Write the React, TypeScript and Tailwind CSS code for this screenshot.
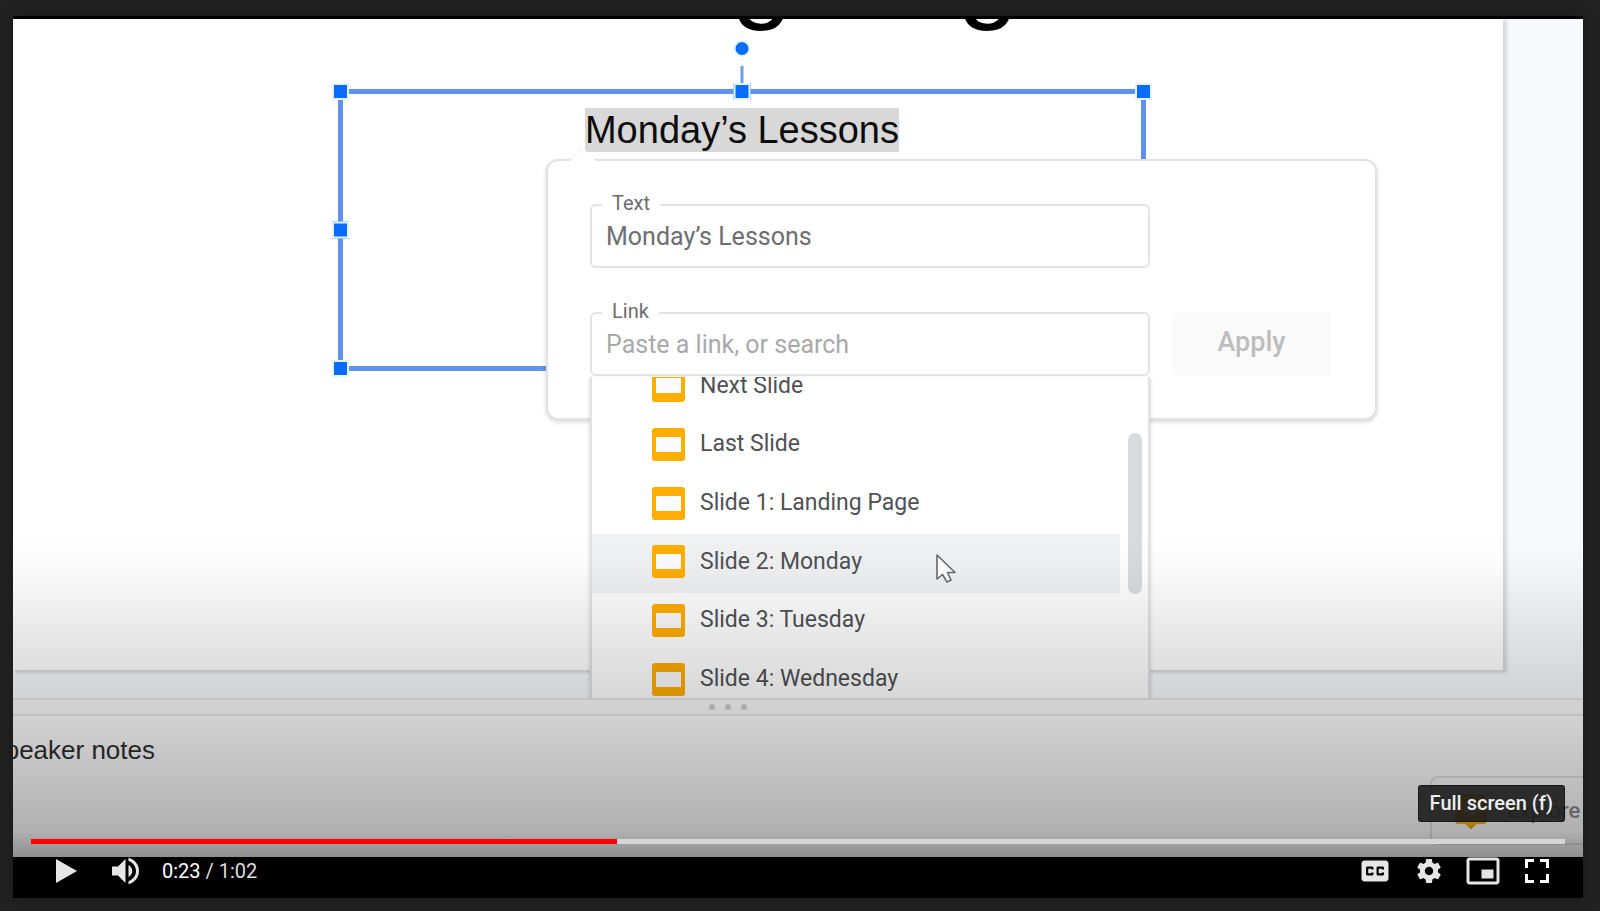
import { useState } from "react";
import type { ReactNode } from "react";

const slides = [
  "Next Slide",
  "Last Slide",
  "Slide 1: Landing Page",
  "Slide 2: Monday",
  "Slide 3: Tuesday",
  "Slide 4: Wednesday",
];

function Handle({ place }: { place: string }) {
  return (
    <span className={`absolute size-[17px] border-2 border-[#e4f4ff] bg-[#0a6cff] ${place}`} />
  );
}

function SlideIcon() {
  return (
    <svg viewBox="0 0 33 33" className="size-[33px] shrink-0" aria-hidden="true">
      <rect x="3" y="8" width="27" height="17" fill="#fbfbfd" />
      <path
        fill="#ffad00"
        fillRule="evenodd"
        d="M3 0h27a3 3 0 0 1 3 3v27a3 3 0 0 1-3 3H3a3 3 0 0 1-3-3V3a3 3 0 0 1 3-3ZM4 9v15h25V9Z"
      />
    </svg>
  );
}

function Field({
  id,
  label,
  value,
  placeholder,
  onChange,
}: {
  id: string;
  label: string;
  value: string;
  placeholder?: string;
  onChange: (value: string) => void;
}) {
  return (
    <div className="relative col-start-1 h-16 rounded-md border-2 border-[#e3e3e4]">
      <label
        htmlFor={id}
        className="absolute -top-4 left-2.5 bg-white px-2.5 text-[20px] leading-[26px] text-[#6c6d70]"
      >
        {label}
      </label>
      <input
        id={id}
        value={value}
        placeholder={placeholder}
        onChange={(e) => onChange(e.target.value)}
        className="size-full bg-transparent px-3.5 text-[25px] text-[#6d6e71] outline-none placeholder:text-[#a9a9ab]"
      />
    </div>
  );
}

function LinkDialog() {
  const [text, setText] = useState("Monday’s Lessons");
  const [link, setLink] = useState("");
  return (
    <div className="absolute top-[140px] left-[533px] w-[831px] rounded-xl border-2 border-[#e2e2e3] bg-white px-[42px] pt-[43px] pb-[42px] shadow-[0_2px_4px_rgba(0,0,0,0.16)]">
      <svg viewBox="0 0 30 16" className="absolute -top-[14px] left-[20px] h-4 w-[30px]" aria-hidden="true">
        <path d="M0 16 15 1l15 15Z" fill="#fff" />
        <path d="M0 14 14 1" stroke="#ececec" strokeWidth="1" />
      </svg>
      <div className="grid grid-cols-[560px_159px] gap-x-[22px] gap-y-11">
        <Field id="link-text" label="Text" value={text} onChange={setText} />
        <Field
          id="link-url"
          label="Link"
          value={link}
          placeholder="Paste a link, or search"
          onChange={setLink}
        />
        <button type="button" className="col-start-2 row-start-2 rounded bg-[#fafafa] pb-1 text-[27px] font-medium text-[#bdbdbe]">
          Apply
        </button>
      </div>
      <div className="absolute top-[216px] left-[42px] h-[330px] w-[560px] overflow-hidden border-x-2 border-[#e2e2e4] bg-white shadow-[0_2px_4px_rgba(0,0,0,0.2)]">
        <ul className="-mt-[19px] mr-[28px] grid h-[352px] grid-rows-6">
          {slides.map((name, i) => (
            <li key={name} className="flex">
              <button
                type="button"
                className={`flex w-full items-center gap-[15px] pb-[3px] pl-[60px] text-left text-[23px] text-[#505154] ${
                  i === 3 ? "bg-[#f0f1f3]" : ""
                }`}
              >
                <SlideIcon />
                {name}
              </button>
            </li>
          ))}
        </ul>
        <span className="absolute top-14 right-[6px] h-[161px] w-3.5 rounded-full bg-[#d9dadd]" />
      </div>
    </div>
  );
}

function Editor() {
  return (
    <div className="relative flex min-h-0 flex-1 flex-col overflow-hidden bg-[#fbfbfb]">
      <div className="relative h-[679px] shrink-0 overflow-hidden bg-[#f8f9fb] pr-20 pb-7">
        <div className="relative h-full overflow-hidden bg-white shadow-[3px_2px_3px_1px_rgba(0,0,0,0.13)]">
          <p className="absolute -top-[111px] left-[388px] font-['Liberation_Sans',sans-serif] text-[110px] leading-[124px] whitespace-nowrap text-black">
            Landing Page
          </p>
          <div className="absolute top-[70px] left-[325px] flex h-[282px] w-[808px] items-start justify-center border-[5px] border-[#5f92ec] pt-[14px]">
            <span className="bg-[#d8d8d8] font-['Liberation_Sans',sans-serif] text-[38px] leading-[44px] text-[#0c0c0c]">
              Monday’s Lessons
            </span>
            <span className="absolute -top-7 left-1/2 h-7 w-[3px] -translate-x-1/2 bg-[#6d9eee]" />
            <span className="absolute -top-[54px] left-1/2 size-[17px] -translate-x-1/2 rounded-full border-2 border-[#e4f4ff] bg-[#0a6cff]" />
            <Handle place="-top-[11px] -left-[11px]" />
            <Handle place="-top-[11px] left-1/2 -translate-x-1/2" />
            <Handle place="-top-[11px] -right-[11px]" />
            <Handle place="top-1/2 -left-[11px] -translate-y-1/2" />
            <Handle place="-bottom-[11px] -left-[11px]" />
          </div>
        </div>
        <LinkDialog />
      </div>
      <div className="flex h-[18px] shrink-0 items-center gap-2.5 border-t-2 border-b-2 border-[#e8e8e8] pl-[696px]">
        <span className="size-1.5 rounded-full bg-[#d0d0d0]" />
        <span className="size-1.5 rounded-full bg-[#d0d0d0]" />
        <span className="size-1.5 rounded-full bg-[#d0d0d0]" />
      </div>
      <div className="relative flex-1 bg-white pt-[18px]">
        <p className="flex w-[142px] justify-end font-['Liberation_Sans',sans-serif] text-[26px] leading-[32px] whitespace-nowrap text-[#303030]">
          peaker notes
        </p>
        <button
          type="button"
          className="absolute right-0 bottom-3 flex h-[69px] w-[153px] items-center gap-5 rounded-l-lg border-2 border-r-0 border-[#e6e6e6] pl-[23px] text-[22px] font-medium text-[#8f8f8f]"
        >
          <svg viewBox="0 0 32 40" className="h-10 w-8 shrink-0" aria-hidden="true">
            <path
              fill="#ffb400"
              d="M4 3h24l4 4v24l-2 2h-8l-6 5-6-5H2l-2-2V7Z"
            />
            <path fill="#fff" d="m16 9 3 7 7 3-7 3-3 7-3-7-7-3 7-3Z" />
            <path fill="#a8a820" d="m13 35.500 3 2.500 3-2.500Z" />
          </svg>
          Explore
        </button>
      </div>
      <div className="pointer-events-none absolute inset-x-0 bottom-0 h-80 bg-[linear-gradient(to_bottom,rgba(0,0,0,0)_0%,rgba(0,0,0,0.012)_7%,rgba(0,0,0,0.055)_20%,rgba(0,0,0,0.098)_32%,rgba(0,0,0,0.13)_42%,rgba(0,0,0,0.18)_57%,rgba(0,0,0,0.25)_76%,rgba(0,0,0,0.31)_92%,rgba(0,0,0,0.36)_95%,rgba(0,0,0,0.44)_100%)]" />
    </div>
  );
}

function PointerArrow() {
  return (
    <svg viewBox="0 0 22 32" className="pointer-events-none absolute top-[537px] left-[922px] h-8 w-[22px]" aria-hidden="true">
      <path
        d="M2 2v24l5.500-4.500L12 29l4-2-3.500-7.500H20Z"
        fill="#fafafa"
        stroke="#67676a"
        strokeWidth="1.600"
        strokeLinejoin="round"
      />
    </svg>
  );
}

function PlayerButton({ label, bright, children }: { label: string; bright?: boolean; children: ReactNode }) {
  return (
    <button type="button" aria-label={label} className={`size-[54px] shrink-0 ${bright ? "text-white" : "text-[#e6e6e6]"}`}>
      <svg viewBox="0 0 36 36" className="size-full" fill="currentColor" fillRule="evenodd" aria-hidden="true">
        {children}
      </svg>
    </button>
  );
}

function PlayerControls() {
  const [seconds, setSeconds] = useState(23.7);
  const played = (seconds / 62) * 100;
  return (
    <div className="absolute inset-x-[18px] bottom-0">
      <input
        type="range"
        aria-label="Seek"
        min={0}
        max={62}
        step={0.1}
        value={seconds}
        onChange={(e) => setSeconds(Number(e.target.value))}
        style={{
          backgroundImage: `linear-gradient(to right, #ff0000 ${played}%, #d6d6d6 ${played}%)`,
        }}
        className="block h-[5px] w-full appearance-none outline-none [&::-webkit-slider-thumb]:size-0 [&::-webkit-slider-thumb]:appearance-none"
      />
      <div className="flex items-center justify-between pr-px pl-[7px]">
        <div className="flex items-center">
          <PlayerButton label="Play">
            <path d="M12 26 26 18 12 10Z" />
          </PlayerButton>
          <div className="w-2" />
          <PlayerButton label="Mute">
            <path d="M8,21 L12,21 L17,26 L17,10 L12,15 L8,15 L8,21 Z M19,14 L19,22 C20.48,21.32 21.5,19.77 21.5,18 C21.5,16.26 20.48,14.74 19,14 Z M19,11.29 C21.89,12.15 24,14.83 24,18 C24,21.17 21.89,23.85 19,24.71 L19,26.77 C23.01,25.86 26,22.28 26,18 C26,13.72 23.01,10.14 19,9.23 L19,11.29 Z" />
          </PlayerButton>
          <p className="pl-2 text-[20px] leading-[52px] text-[#dddddd]">
            <span className="text-white">0:23</span> / 1:02
          </p>
        </div>
        <div className="flex items-center">
          <PlayerButton label="Subtitles">
            <path d="M11,11 C9.89,11 9,11.9 9,13 L9,23 C9,24.1 9.89,25 11,25 L25,25 C26.1,25 27,24.1 27,23 L27,13 C27,11.9 26.1,11 25,11 L11,11 Z M17,17 L15.5,17 L15.5,16.5 L13.5,16.5 L13.5,19.5 L15.5,19.5 L15.5,19 L17,19 L17,20 C17,20.55 16.55,21 16,21 L13,21 C12.45,21 12,20.55 12,20 L12,16 C12,15.45 12.45,15 13,15 L16,15 C16.55,15 17,15.45 17,16 L17,17 Z M24,17 L22.5,17 L22.5,16.5 L20.5,16.5 L20.5,19.5 L22.5,19.5 L22.5,19 L24,19 L24,20 C24,20.55 23.55,21 23,21 L20,21 C19.45,21 19,20.55 19,20 L19,16 C19,15.45 19.45,15 20,15 L23,15 C23.55,15 24,15.45 24,16 L24,17 Z" />
          </PlayerButton>
          <PlayerButton label="Settings">
            <path d="m 23.94,18.78 c .03,-0.25 .05,-0.51 .05,-0.78 0,-0.27 -0.02,-0.52 -0.05,-0.78 l 1.68,-1.32 c .15,-0.12 .19,-0.33 .09,-0.51 l -1.6,-2.76 c -0.09,-0.17 -0.31,-0.24 -0.48,-0.17 l -1.99,.8 c -0.41,-0.32 -0.86,-0.58 -1.35,-0.78 l -0.30,-2.12 c -0.02,-0.19 -0.19,-0.33 -0.39,-0.33 l -3.2,0 c -0.2,0 -0.36,.14 -0.39,.33 l -0.30,2.12 c -0.48,.2 -0.93,.47 -1.35,.78 l -1.99,-0.8 c -0.18,-0.07 -0.39,0 -0.48,.17 l -1.6,2.76 c -0.10,.17 -0.05,.39 .09,.51 l 1.68,1.32 c -0.03,.25 -0.05,.52 -0.05,.78 0,.26 .02,.52 .05,.78 l -1.68,1.32 c -0.15,.12 -0.19,.33 -0.09,.51 l 1.6,2.76 c .09,.17 .31,.24 .48,.17 l 1.99,-0.8 c .41,.32 .86,.58 1.35,.78 l .30,2.12 c .02,.19 .19,.33 .39,.33 l 3.2,0 c .2,0 .36,-0.14 .39,-0.33 l .30,-2.12 c .48,-0.2 .93,-0.47 1.35,-0.78 l 1.99,.8 c .18,.07 .39,0 .48,-0.17 l 1.6,-2.76 c .09,-0.17 .05,-0.39 -0.09,-0.51 l -1.68,-1.32 0,0 z m -5.94,2.01 c -1.54,0 -2.8,-1.25 -2.8,-2.8 0,-1.54 1.25,-2.8 2.8,-2.8 1.54,0 2.8,1.25 2.8,2.8 0,1.54 -1.25,2.8 -2.8,2.8 l 0,0 z" />
          </PlayerButton>
          <PlayerButton label="Miniplayer">
            <path d="M25,17 L17,17 L17,23 L25,23 Z M29,25 L29,10.98 C29,9.88 28.1,9 27,9 L9,9 C7.9,9 7,9.88 7,10.98 L7,25 C7,26.1 7.9,27 9,27 L27,27 C28.1,27 29,26.1 29,25 Z M27,25.02 L9,25.02 L9,10.97 L27,10.97 Z" />
          </PlayerButton>
          <PlayerButton label="Full screen" bright>
            <path d="M10 16h2v-4h4v-2h-6ZM20 10v2h4v4h2v-6ZM24 24h-4v2h6v-6h-2ZM12 20h-2v6h6v-2h-4Z" />
          </PlayerButton>
        </div>
      </div>
      <div
        role="tooltip"
        className="absolute right-0 bottom-[76px] rounded-[3px] border border-black/40 bg-[#1c1c1c]/90 px-[11px] py-1 text-[20px] leading-[27px] font-medium text-[#eeeeee]"
      >
        Full screen (f)
      </div>
    </div>
  );
}

export default function App() {
  return (
    <main className="flex min-h-screen flex-col bg-[#212121] pt-4 pr-[17px] pb-[13px] pl-[13px] font-['Roboto',sans-serif]">
      <section className="relative flex flex-1 flex-col overflow-hidden bg-black pt-[3px] shadow-[0_0_12px_rgba(0,0,0,0.25)]">
        <Editor />
        <div className="h-[41px] shrink-0 bg-black" />
        <PointerArrow />
        <PlayerControls />
      </section>
    </main>
  );
}
